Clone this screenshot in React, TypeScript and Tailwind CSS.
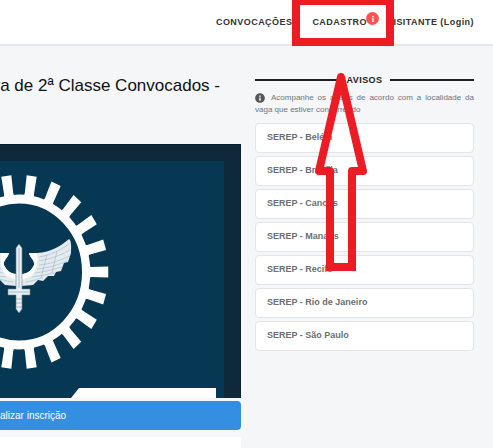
import { FaInfo, FaInfoCircle } from "react-icons/fa";

const avisos = [
  "Belém",
  "Brasília",
  "Canoas",
  "Manaus",
  "Recife",
  "Rio de Janeiro",
  "São Paulo",
];

const TEETH = 22;

function Wing() {
  return (
    <g>
      <path
        d="M3 2 C8 2 13 -2 15 -7 C16 -12 11 -14 10 -19 H18 C32 -20 42 -26 50 -33 C53 -31 52 -22 52 -19 L49 -10 L45 -9 L42 -1 L37 0 L35 4 L29 4 L24 9 L19 8 L14 13 L3 14 Z"
        fill="#e3ebf0"
      />
      <path
        d="M3 2 C8 2 13 -2 15 -7 C16 -12 11 -14 10 -19 H18 C19 -10 18 -2 12 4 L3 8 Z"
        fill="#fff"
      />
      <path
        d="M20 -15 C32 -17 42 -22 50 -28 M20 -11 C32 -13 42 -17 51 -22 M20 -7 C32 -8 42 -12 50 -16 M18 -3 C30 -4 38 -7 48 -11 M16 1 C24 0 32 -2 43 -5 M13 5 C22 4 30 2 36 1 M6 10 C14 9 20 7 24 5 M28 -17 L22 6 M38 -21 L33 1"
        stroke="#a3b5c1"
        strokeWidth="0.6"
        fill="none"
      />
    </g>
  );
}

function Emblema() {
  return (
    <svg
      className="block h-[254px] w-full bg-[#073853]"
      viewBox="0 0 241 254"
      preserveAspectRatio="xMinYMin slice"
      role="img"
      aria-label="Emblema"
    >
      <path d="M0 0H241V254H224V17H0Z" fill="#10293a" />
      <path d="M0 .5H240.5V254" stroke="#05202f" fill="none" />
      <g transform="translate(19 128) scale(.92 1)">
        <circle r="73" fill="none" stroke="#fff" strokeWidth="9" />
        {Array.from({ length: TEETH }, (_, i) => (
          <path
            key={i}
            d="M-6 -74 L-5 -79 L-5.5 -97 H5.5 L5 -79 L6 -74Z"
            fill="#fff"
            transform={`rotate(${((i + 0.5) * 360) / TEETH})`}
          />
        ))}
      </g>
      <g transform="translate(19 128)">
        <Wing />
        <g transform="scale(-1 1)">
          <Wing />
        </g>
        <path
          d="M0 -28 L3 -24 V17 H11 V23 H3 V37 L0 41 L-3 37 V23 H-11 V17 H-3 V-24Z"
          fill="#e9eff3"
          stroke="#5f7c8f"
          strokeWidth="0.6"
        />
        <path d="M0 -24V16M-3 27H3M-3 31H3M-3 35H3M-10 20H10" stroke="#8fa5b3" strokeWidth="0.7" />
      </g>
      <path d="M71 254L79 244H216V254Z" fill="#fff" />
    </svg>
  );
}

// Marcação vermelha por cima da página: caixa no menu e seta
function Marcacao() {
  return (
    <svg
      className="pointer-events-none absolute top-0 right-0 h-[280px] w-[210px]"
      viewBox="283 0 210 280"
      fill="none"
      stroke="#ed1c24"
      strokeWidth="8"
      aria-hidden="true"
    >
      <path d="M296 1H390V42H296Z" />
      <path
        d="M330 171H319L341 77L363 171H352"
        strokeLinejoin="round"
        strokeLinecap="round"
      />
      <path d="M330 171V267H352V171" />
    </svg>
  );
}

export default function App() {
  return (
    <div className="relative min-h-screen overflow-hidden bg-[#f4f6f8] font-['Liberation_Sans',Arial,sans-serif]">
      <header className="flex h-[46px] items-center justify-end border-b-2 border-[#e6e8ec] bg-white pr-[19px]">
        <nav className="flex gap-5 pt-[2px] text-[9px] font-bold tracking-wider text-[#333]">
          <a href="#convocacoes">CONVOCAÇÕES</a>
          <a href="#cadastro" className="relative">
            CADASTRO
            <span className="absolute -top-1 left-full -ml-px flex size-[13px] items-center justify-center rounded-full bg-[#ff5252] text-white">
              <FaInfo size={6} />
            </span>
          </a>
          <a href="#login">VISITANTE (Login)</a>
        </nav>
      </header>

      <div className="flex gap-[14px] pr-[19px]">
        <main className="min-w-0 flex-1">
          <div className="flex h-[98px] justify-end pt-7 pr-[21px]">
            <h1 className="text-[17px] leading-6 whitespace-nowrap text-[#111]">
              va de 2ª Classe Convocados -
            </h1>
          </div>
          <Emblema />
          <button
            type="button"
            className="mt-[3px] block h-[29px] w-full rounded-r-sm bg-[#348fe2] text-left text-[10px] text-white"
          >
            alizar inscrição
          </button>
          <div className="mt-[7px] h-4 bg-white" />
        </main>

        <aside className="w-[219px] shrink-0 pt-[26px]">
          <h2 className="flex items-center gap-[7px] text-[9px] leading-4 font-bold tracking-wider text-[#222] before:h-[2px] before:flex-1 before:bg-[#222] after:h-[2px] after:flex-1 after:bg-[#222]">
            AVISOS
          </h2>
          <p className="mt-1 text-justify text-[8px] leading-3 text-[#6f7479]">
            <FaInfoCircle size={10} className="mr-[6px] inline align-middle text-[#555]" />
            Acompanhe os avisos de acordo com a localidade da vaga que estiver
            concorrendo
          </p>
          <ul className="mt-[7px] flex flex-col gap-[3px]">
            {avisos.map((cidade) => (
              <li key={cidade}>
                <a
                  href="#serep"
                  className="flex h-[30px] items-center rounded-sm border border-[#e2e4e6] bg-white px-[11px] text-[9px] font-bold text-[#6b6f73]"
                >
                  SEREP - {cidade}
                </a>
              </li>
            ))}
          </ul>
        </aside>
      </div>

      <Marcacao />
    </div>
  );
}
